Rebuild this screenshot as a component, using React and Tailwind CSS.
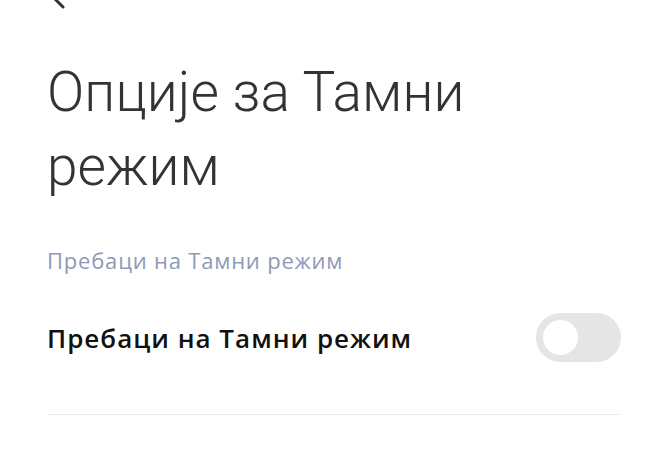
export default function App() {
  return (
    <div className="w-full h-[450px] bg-white overflow-hidden relative" style={{ fontFamily: "Roboto, 'Noto Sans', sans-serif" }}>
      <div className="pl-[46px] -mt-[14px] h-[24px]">
        <svg width="26" height="24" viewBox="0 0 26 24" fill="none">
          <path d="M17 -1 L6 10 L17 21" stroke="#333" strokeWidth="3" strokeLinecap="round" strokeLinejoin="round" />
        </svg>
      </div>
      <div className="pl-[47px] pr-[42px]">
        <h1 className="mt-[45px] text-[55px] leading-[74px] font-light text-[#333] tracking-[0.1px]">Опције за Тамни режим</h1>
        <div className="mt-[42px] text-[22px] leading-[30px] text-[#8e9ab5] tracking-[0.8px]" style={{ fontFamily: "'Open Sans', sans-serif" }}>Пребаци на Тамни режим</div>
        <div className="mt-[38px] flex items-center justify-between">
          <span className="text-[26px] leading-[32px] font-semibold text-[#111] tracking-[1px]" style={{ fontFamily: "'Open Sans', sans-serif" }}>Пребаци на Тамни режим</span>
          <div className="w-[85px] h-[49px] rounded-full bg-[#e5e5e5] flex items-center pl-[7px]">
            <div className="w-[35px] h-[35px] rounded-full bg-white"></div>
          </div>
        </div>
        <div className="mt-[52px] h-px bg-[#ececec]"></div>
      </div>
    </div>
  );
}
